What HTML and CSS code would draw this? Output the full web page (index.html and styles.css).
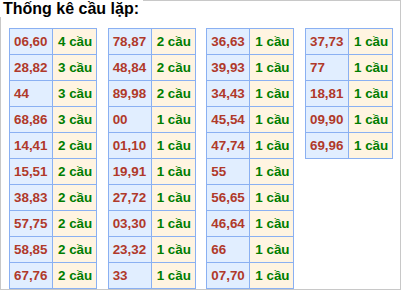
FILE: index.html
```html
<!DOCTYPE html>
<html>
<head>
<meta charset="utf-8">
<link rel="stylesheet" href="styles.css">
</head>
<body>
<div class="box">
  <div class="title">Thống kê cầu lặp:</div>
  <div class="tables">
    <div class="tbl">
      <div class="num">06,60</div><div class="cnt">4 cầu</div>
      <div class="num">28,82</div><div class="cnt">3 cầu</div>
      <div class="num">44</div><div class="cnt">3 cầu</div>
      <div class="num">68,86</div><div class="cnt">3 cầu</div>
      <div class="num">14,41</div><div class="cnt">2 cầu</div>
      <div class="num">15,51</div><div class="cnt">2 cầu</div>
      <div class="num">38,83</div><div class="cnt">2 cầu</div>
      <div class="num">57,75</div><div class="cnt">2 cầu</div>
      <div class="num">58,85</div><div class="cnt">2 cầu</div>
      <div class="num">67,76</div><div class="cnt">2 cầu</div>
    </div>
    <div class="tbl">
      <div class="num">78,87</div><div class="cnt">2 cầu</div>
      <div class="num">48,84</div><div class="cnt">2 cầu</div>
      <div class="num">89,98</div><div class="cnt">2 cầu</div>
      <div class="num">00</div><div class="cnt">1 cầu</div>
      <div class="num">01,10</div><div class="cnt">1 cầu</div>
      <div class="num">19,91</div><div class="cnt">1 cầu</div>
      <div class="num">27,72</div><div class="cnt">1 cầu</div>
      <div class="num">03,30</div><div class="cnt">1 cầu</div>
      <div class="num">23,32</div><div class="cnt">1 cầu</div>
      <div class="num">33</div><div class="cnt">1 cầu</div>
    </div>
    <div class="tbl">
      <div class="num">36,63</div><div class="cnt">1 cầu</div>
      <div class="num">39,93</div><div class="cnt">1 cầu</div>
      <div class="num">34,43</div><div class="cnt">1 cầu</div>
      <div class="num">45,54</div><div class="cnt">1 cầu</div>
      <div class="num">47,74</div><div class="cnt">1 cầu</div>
      <div class="num">55</div><div class="cnt">1 cầu</div>
      <div class="num">56,65</div><div class="cnt">1 cầu</div>
      <div class="num">46,64</div><div class="cnt">1 cầu</div>
      <div class="num">66</div><div class="cnt">1 cầu</div>
      <div class="num">07,70</div><div class="cnt">1 cầu</div>
    </div>
    <div class="tbl">
      <div class="num">37,73</div><div class="cnt">1 cầu</div>
      <div class="num">77</div><div class="cnt">1 cầu</div>
      <div class="num">18,81</div><div class="cnt">1 cầu</div>
      <div class="num">09,90</div><div class="cnt">1 cầu</div>
      <div class="num">69,96</div><div class="cnt">1 cầu</div>
    </div>
  </div>
</div>
</body>
</html>
```
FILE: styles.css
```css
html, body {
  margin: 0;
  padding: 0;
  background: #fff;
}
.box {
  box-sizing: border-box;
  width: 401px;
  height: 290px;
  border: 1px solid #c8c8c8;
  font-family: "Liberation Sans", Arial, sans-serif;
}
.title {
  display: inline-block;
  margin: -1px 0 0 -1px;
  padding: 0 4px 0 3px;
  height: 17px;
  line-height: 17px;
  background: #fff;
  font-size: 16px;
  font-weight: bold;
  color: #000;
  vertical-align: top;
}
.tables {
  display: flex;
  align-items: flex-start;
  gap: 10.67px;
  padding: 9px 0 0 8px;
}
.tbl {
  display: grid;
  grid-template-columns: 43px 44px;
  grid-auto-rows: 26px;
  border-top: 1px solid #8ab0f2;
  border-left: 1px solid #8ab0f2;
}
.tbl > div {
  border-right: 1px solid #8ab0f2;
  border-bottom: 1px solid #8ab0f2;
  font-size: 13.4px;
  font-weight: bold;
  line-height: 25px;
  white-space: nowrap;
}
.num {
  background: #e1eeff;
  color: #b0392a;
  padding-left: 4px;
}
.cnt {
  background: #fff4e1;
  color: #007d00;
  padding-left: 5px;
}
```
